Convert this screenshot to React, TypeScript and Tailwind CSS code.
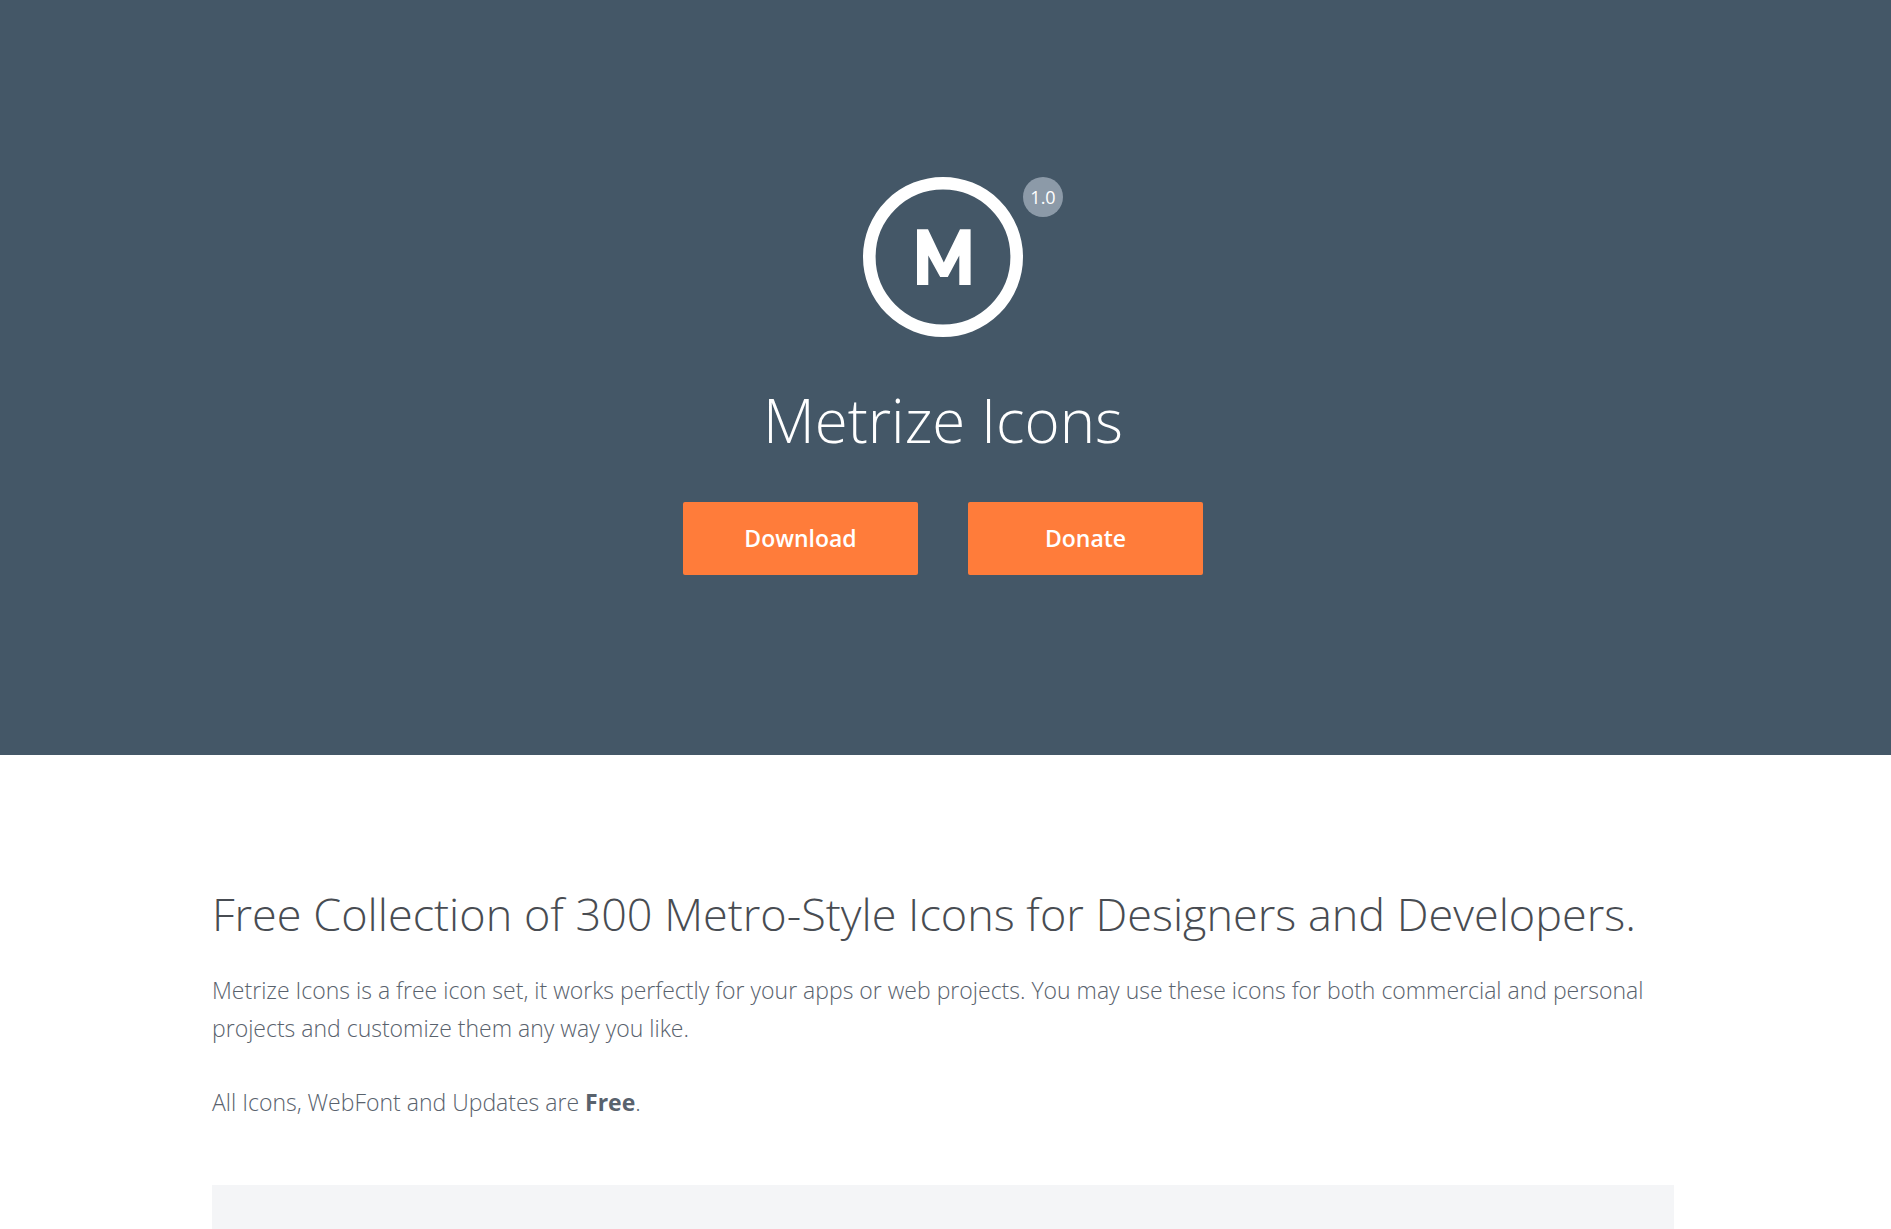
const actions = [
  { label: 'Download', href: '#download' },
  { label: 'Donate', href: '#donate' },
];

function Logo() {
  return (
    <svg viewBox="0 0 160 160" className="size-full" role="img" aria-label="Metrize">
      <circle cx="80" cy="80" r="73.7" fill="none" stroke="#fff" strokeWidth="12.6" />
      <path fill="#fff" d="M54 108V52.3h11L80.8 85.5 97 52.3h10.6V108H96.3V78.5L84.8 100h-7.6L65.3 78.5V108z" />
    </svg>
  );
}

export default function App() {
  return (
    <div className="min-h-screen bg-white font-['Open_Sans',sans-serif]">
      <header className="bg-[#445767] pt-[177px] pr-[5px] pb-45 text-center text-white">
        <div className="relative mx-auto size-40">
          <Logo />
          <span className="absolute top-0 left-full flex size-10 items-center justify-center rounded-full bg-[#8c9aa8] text-lg">
            1.0
          </span>
        </div>
        <h1 className="mt-13 text-6xl leading-[63px] font-light">Metrize Icons</h1>
        <div className="mt-[50px] flex justify-center gap-[50px]">
          {actions.map(action => (
            <a
              key={action.label}
              href={action.href}
              className="w-[235px] rounded-xs bg-[#ff7c3a] py-5 text-[23px] leading-[33px] font-semibold"
            >
              {action.label}
            </a>
          ))}
        </div>
      </header>

      <div className="pr-[21px] pl-4">
        <main className="mx-auto max-w-[1462px] pt-32 text-[23px] leading-[38px] font-light text-[#59626d]">
          <h2 className="text-[45px] leading-[62px] text-[#484c52]">
            Free Collection of 300 Metro-Style Icons for Designers and Developers.
          </h2>
          <p className="mt-[26px]">
            Metrize Icons is a free icon set, it works perfectly for your apps or web projects. You may use these
            icons for both commercial and personal projects and customize them any way you like.
          </p>
          <p className="mt-9">
            All Icons, WebFont and Updates are <strong className="font-bold">Free</strong>.
          </p>
          <section className="mt-16 h-16 bg-[#f4f5f7]" />
        </main>
      </div>
    </div>
  );
}
